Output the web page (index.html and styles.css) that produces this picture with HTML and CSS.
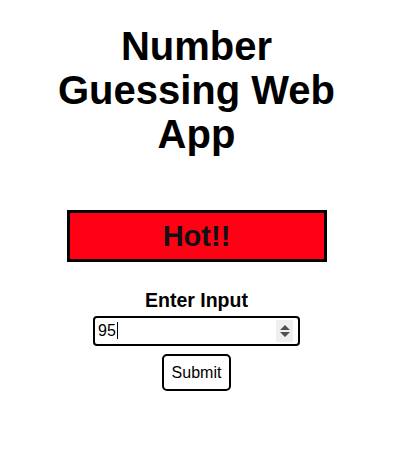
FILE: index.html
```html
<!DOCTYPE html>
<html lang="en">
<head>
<meta charset="utf-8">
<title>Number Guessing Web App</title>
<link rel="stylesheet" href="styles.css">
</head>
<body>
<main class="app">
  <h1 class="title">Number Guessing Web App</h1>
  <div class="result">Hot!!</div>
  <label class="label" for="guess">Enter Input</label>
  <div class="field">
    <input class="input" id="guess" type="text" value="95">
    <span class="caret"></span>
    <span class="spin">
      <svg width="12" height="16" viewBox="0 0 12 16"><path d="M6 2 L11 7 L1 7 Z M1 9 L11 9 L6 14 Z" fill="#505050"/></svg>
    </span>
  </div>
  <button class="submit" type="button">Submit</button>
</main>
</body>
</html>
```
FILE: styles.css
```css
html, body {
  margin: 0;
  padding: 0;
  background: #ffffff;
}
body {
  font-family: "Liberation Sans", Arial, sans-serif;
  color: #000;
}
.app {
  width: 393px;
  box-sizing: border-box;
  padding: 24px 8px 0 8px;
  display: flex;
  flex-direction: column;
  align-items: center;
}
.title {
  margin: 0;
  width: 300px;
  font-size: 40px;
  line-height: 44px;
  font-weight: 700;
  text-align: center;
}
.result {
  margin-top: 54px;
  width: 260px;
  height: 52px;
  box-sizing: border-box;
  border: 3px solid #000;
  background: #ff0015;
  color: #111;
  font-size: 29px;
  font-weight: 700;
  line-height: 46px;
  text-align: center;
}
.label {
  margin-top: 26px;
  font-size: 19.5px;
  font-weight: 700;
  line-height: 24px;
}
.field {
  position: relative;
  margin-top: 4px;
  width: 207px;
  height: 30px;
}
.input {
  width: 100%;
  height: 100%;
  box-sizing: border-box;
  border: 2px solid #000;
  border-radius: 4px;
  padding: 0 3px;
  font-family: "Liberation Sans", Arial, sans-serif;
  font-size: 16px;
  color: #000;
  background: #fff;
  outline: none;
}
.caret {
  position: absolute;
  left: 24px;
  top: 6px;
  width: 1px;
  height: 17px;
  background: #000;
}
.spin {
  position: absolute;
  right: 7px;
  top: 4px;
  width: 17px;
  height: 22px;
  background: #efefef;
  display: flex;
  align-items: center;
  justify-content: center;
}
.submit {
  margin-top: 8px;
  width: 69px;
  height: 37px;
  box-sizing: border-box;
  border: 2px solid #000;
  border-radius: 5px;
  background: #fff;
  font-family: "Liberation Sans", Arial, sans-serif;
  font-size: 16px;
  color: #000;
  padding: 0;
}
```
